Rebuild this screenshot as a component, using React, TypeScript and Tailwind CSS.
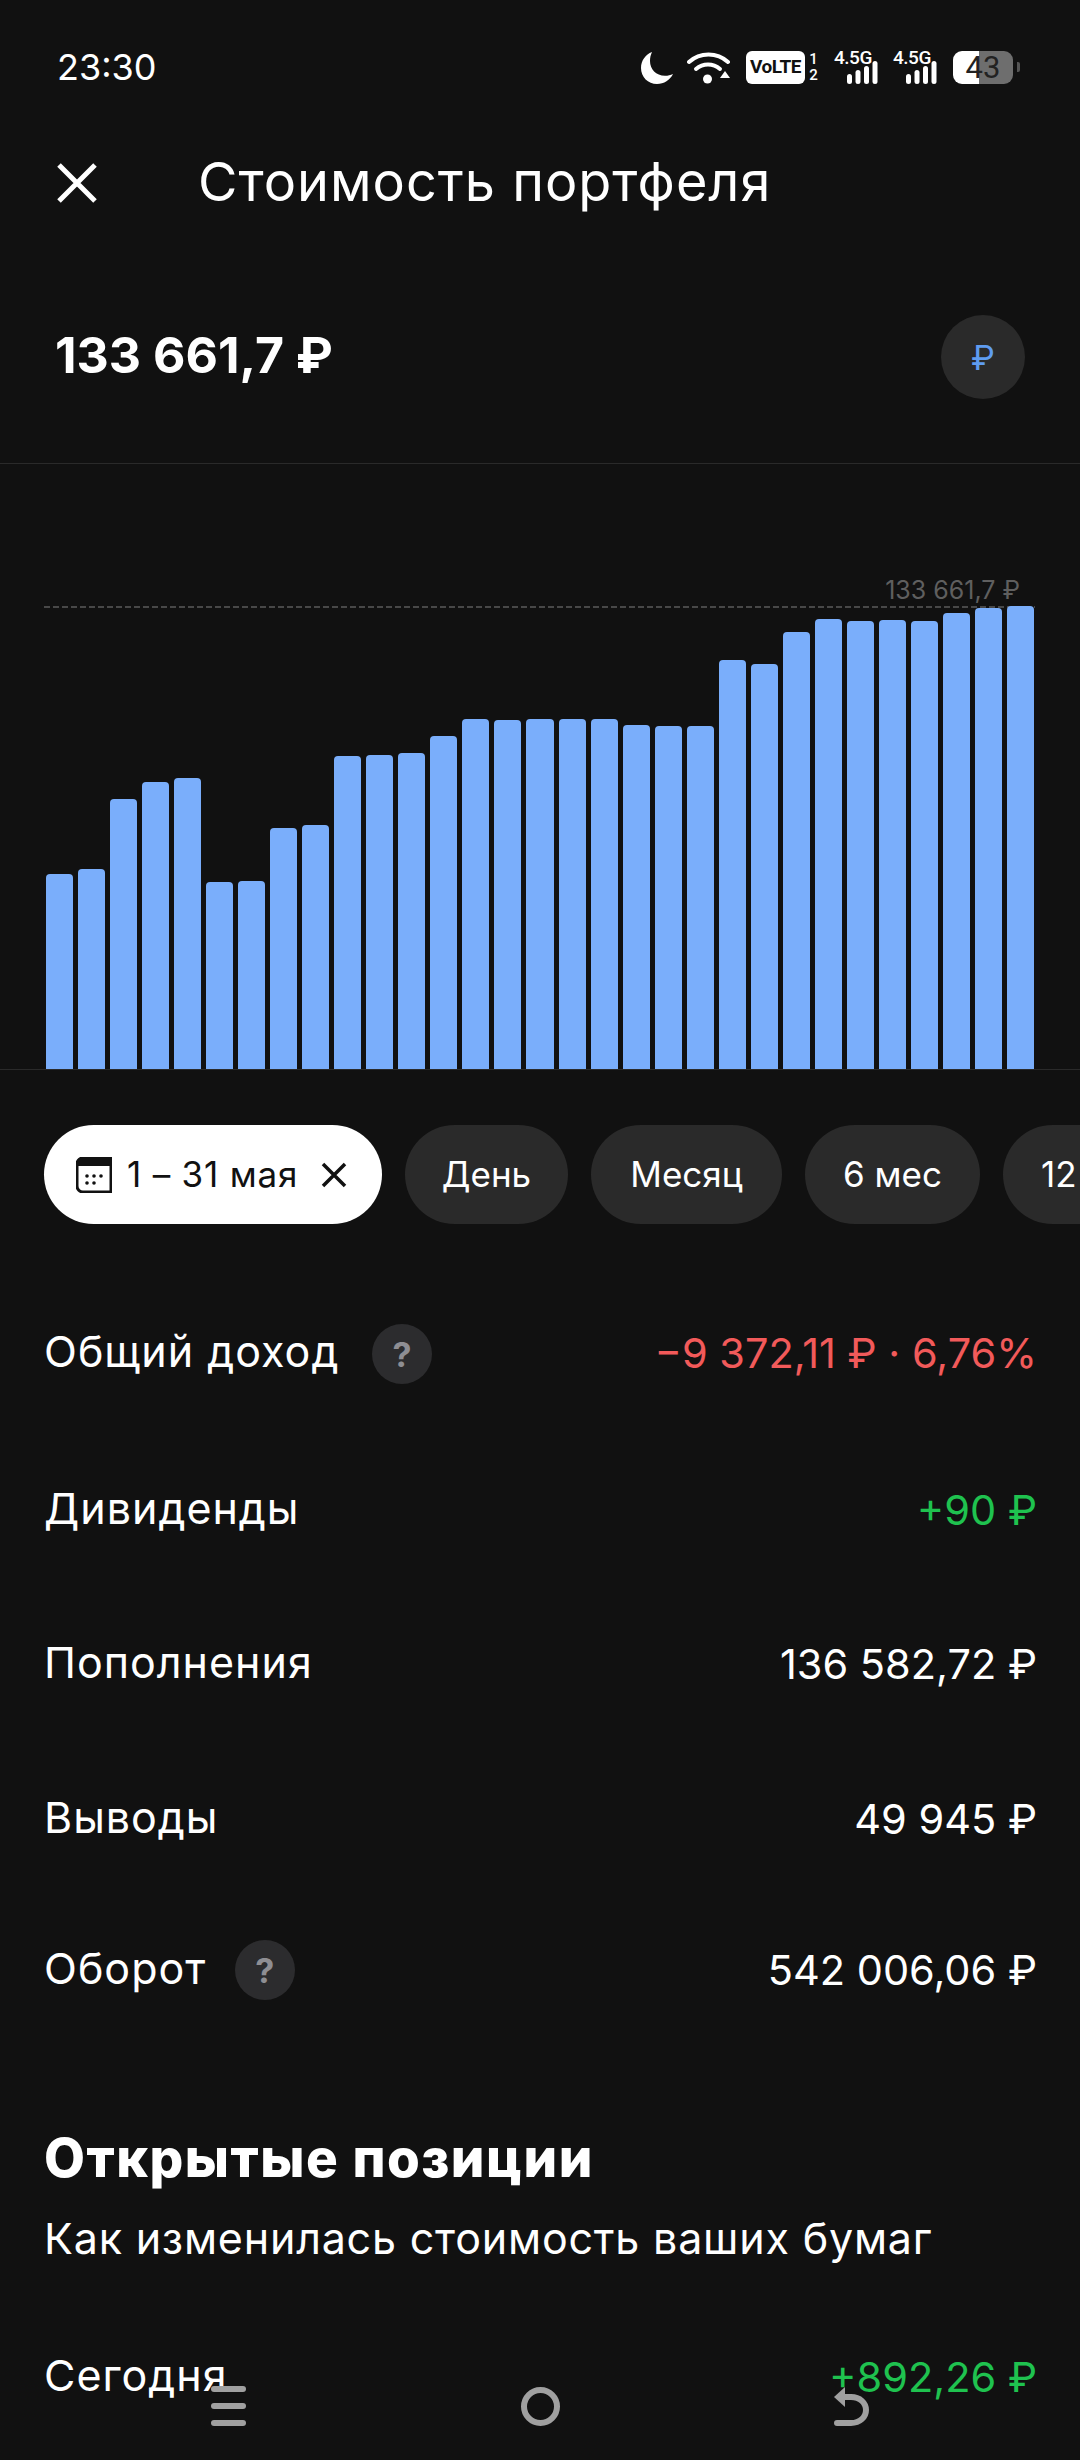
import { X } from "lucide-react";

const font = "font-['Inter',sans-serif]";

const barTops = [
  874, 869, 799, 782, 778, 882, 881, 828, 825, 756, 755, 753, 736, 719, 720, 719,
  719, 719, 725, 726, 726, 660, 664, 632, 619, 621, 620, 621, 613, 608, 606,
];
const chartBottom = 1069;

function Moon() {
  return (
    <svg width="32" height="33" viewBox="0 0 32 33" fill="white">
      <path d="M11 1C4.500 3.500 0 9.500 0 17c0 9 7 16 16 16 7 0 13-4 16-10-2.500 1.200-5 1.800-8 1.800C15 24.800 9 18 9 10c0-3.200.7-6.200 2-9z" />
    </svg>
  );
}

function Wifi() {
  return (
    <svg width="44" height="33" viewBox="0 0 44 33" fill="none" stroke="white" strokeWidth="4" strokeLinecap="round">
      <path d="M2 11C13 1 30 1 41 11" />
      <path d="M9 18c7-6 17-6 24 0" />
      <circle cx="20.500" cy="28" r="4.500" fill="white" stroke="none" />
      <path d="M38 20l5 7h-10z" fill="white" stroke="none" />
    </svg>
  );
}

function Signal() {
  return (
    <div className="relative w-[42px] h-[33px]">
      <span className="absolute left-[-1px] top-[-4px] text-[19px] leading-[22px] font-medium text-white tracking-[-0.5px] font-['Roboto',sans-serif]">4.5G</span>
      <svg className="absolute left-[12px] top-[10px]" width="31" height="23" viewBox="0 0 31 23" fill="white">
        <rect x="0" y="13" width="5" height="10" rx="2.500" />
        <rect x="8.500" y="9" width="5" height="14" rx="2.500" />
        <rect x="17" y="5" width="5" height="18" rx="2.500" />
        <rect x="25.500" y="0" width="5" height="23" rx="2.500" />
      </svg>
    </div>
  );
}

function StatusBar() {
  return (
    <div className="h-[134px] flex items-center pl-[57px] pr-[60px] justify-between">
      <span className="text-[36px] text-white">23:30</span>
      <div className="flex items-center">
        <Moon />
        <div className="w-[14px]" />
        <Wifi />
        <div className="w-[15px]" />
        <div className="w-[59px] h-[33px] bg-white rounded-[6px] flex items-center justify-center text-[19px] font-bold text-[#111] tracking-[-0.5px] font-['Roboto',sans-serif]">
          VoLTE
        </div>
        <div className="w-[9px] ml-[4px] flex flex-col items-center text-[15px] leading-[16px] font-medium text-white font-['Roboto',sans-serif]">
          <span>1</span>
          <span>2</span>
        </div>
        <div className="w-[17px]" />
        <Signal />
        <div className="w-[17px]" />
        <Signal />
        <div className="w-[17px]" />
        <div className="relative w-[60px] h-[33px]">
          <div className="flex h-full rounded-[9px] overflow-hidden">
            <div className="w-[26px] bg-white" />
            <div className="flex-1 bg-[#6e6e6e]" />
          </div>
          <span className="absolute inset-0 flex items-center justify-center text-[31px] leading-[33px] text-[#222] font-['Roboto',sans-serif]">43</span>
        </div>
        <div className="w-[3px] h-[10px] ml-[4px] bg-[#555] rounded-r-[2px]" />
      </div>
    </div>
  );
}

function Chart() {
  return (
    <div className="relative h-[606px] border-b border-[#2a2a2a] flex items-end pl-[46px] pr-[46px] gap-[5px]">
      <div className="absolute left-[44px] w-[991px] top-[142px] h-[2px] bg-[repeating-linear-gradient(90deg,#484848_0,#484848_6px,transparent_6px,transparent_9px)]" />
      <span className="absolute right-[60px] top-[110px] text-[25px] leading-[32px] text-[#5f5f5f]">133 661,7 ₽</span>
      {barTops.map((top, i) => (
        <div
          key={i}
          className="relative flex-1 bg-[#7aaefb] rounded-t-[4px]"
          style={{ height: chartBottom - top }}
        />
      ))}
    </div>
  );
}

function Chip({ label, className }: { label: string; className: string }) {
  return (
    <div className={`h-[99px] shrink-0 rounded-full bg-[#2a2a2a] flex items-center text-[35px] text-white ${className}`}>
      {label}
    </div>
  );
}

function Help({ className }: { className: string }) {
  return (
    <div className={`w-[60px] h-[60px] rounded-full bg-[#2c2c2e] flex items-center justify-center text-[34px] font-bold text-[#8e8e93] ${className}`}>
      ?
    </div>
  );
}

function Row(props: { label: string; value: string; valueClass?: string; height: string; help?: string }) {
  return (
    <div className={`flex items-center justify-between ${props.height}`}>
      <div className="flex items-center text-[43px] tracking-[1px] text-white">
        <span>{props.label}</span>
        {props.help && <Help className={props.help} />}
      </div>
      <span className={`mt-[5px] text-[41.5px] ${props.valueClass ?? "text-white"}`}>{props.value}</span>
    </div>
  );
}

export default function App() {
  return (
    <div className={`relative w-[1080px] h-[2460px] overflow-hidden bg-[#111111] ${font}`}>
      <StatusBar />
      <div className="h-[98px] flex items-center pl-[55px]">
        <svg width="44" height="44" viewBox="0 0 44 44" fill="none" stroke="white" strokeWidth="5">
          <path d="M4 4l36 36M40 4L4 40" />
        </svg>
        <span className="ml-[99px] mb-[3px] text-[54px] tracking-[1px] text-white">Стоимость портфеля</span>
      </div>
      <div className="mt-[83px] mb-[64px] pl-[55px] pr-[55px] flex items-center justify-between">
        <span className="mb-[3px] text-[50px] font-bold text-white">133 661,7 ₽</span>
        <div className="w-[84px] h-[84px] rounded-full bg-[#2a2a2a] flex items-center justify-center text-[34px] text-[#5f9cf0]">₽</div>
      </div>
      <div className="h-px bg-[#2a2a2a]" />
      <Chart />
      <div className="mt-[55px] pl-[44px] flex gap-[23px] overflow-hidden">
        <div className="h-[99px] w-[338px] shrink-0 rounded-full bg-white flex items-center pl-[32px] text-[35px] text-[#111]">
          <svg width="36" height="36" viewBox="0 0 36 36" fill="none">
            <path d="M7 1h28v34H7a6 6 0 0 1-6-6V7a6 6 0 0 1 6-6z" fill="none" stroke="#111" strokeWidth="3" />
            <path d="M7 0h29v9H0V7a7 7 0 0 1 7-7z" fill="#111" />
            <g fill="#111">
              <circle cx="11" cy="19" r="1.800" />
              <circle cx="18" cy="19" r="1.800" />
              <circle cx="25" cy="19" r="1.800" />
              <circle cx="11" cy="26" r="1.800" />
              <circle cx="18" cy="26" r="1.800" />
            </g>
          </svg>
          <span className="ml-[15px] tracking-[0.8px]">1 – 31 мая</span>
          <svg width="26" height="26" viewBox="0 0 26 26" fill="none" stroke="#111" strokeWidth="3.500" className="ml-[23px]">
            <path d="M2 2l22 22M24 2L2 24" />
          </svg>
        </div>
        <Chip label="День" className="w-[163px] justify-center" />
        <Chip label="Месяц" className="w-[191px] justify-center" />
        <Chip label="6 мес" className="w-[175px] justify-center" />
        <Chip label="12 мес" className="w-[175px] pl-[38px]" />
      </div>
      <div className="mt-[48px] pl-[44px] pr-[43px]">
        <Row label="Общий доход" value="−9 372,11 ₽ · 6,76%" valueClass="text-[#f25a5a]" height="h-[158px]" help="ml-[33px] mt-[6px]" />
        <Row label="Дивиденды" value="+90 ₽" valueClass="text-[#1fc24f]" height="h-[156px]" />
        <Row label="Пополнения" value="136 582,72 ₽" height="h-[152px]" />
        <Row label="Выводы" value="49 945 ₽" height="h-[158px]" />
        <Row label="Оборот" value="542 006,06 ₽" height="h-[144px]" help="ml-[29px] mt-[4px]" />
        <h2 className="mt-[86px] text-[53px] leading-[64px] tracking-[1.5px] font-extrabold text-white">Открытые позиции</h2>
        <p className="mt-[18px] text-[43px] leading-[60px] tracking-[0.8px] text-white">Как изменилась стоимость ваших бумаг</p>
        <Row label="Сегодня" value="+892,26 ₽" valueClass="text-[#1fc24f]" height="h-[214px]" />
      </div>
      <div className="absolute left-0 right-0 top-[2386px] flex justify-between pl-[211px] pr-[211px] items-center">
        <div className="flex flex-col gap-[11px]">
          <div className="w-[35px] h-[6px] rounded-full bg-[#a0a0a0]" />
          <div className="w-[35px] h-[6px] rounded-full bg-[#a0a0a0]" />
          <div className="w-[35px] h-[6px] rounded-full bg-[#a0a0a0]" />
        </div>
        <div className="w-[39px] h-[39px] rounded-full border-[6px] border-[#a0a0a0]" />
        <svg width="35" height="39" viewBox="0 0 35 39" fill="none" stroke="#a0a0a0" strokeWidth="6" strokeLinecap="round">
          <path d="M3 36h14c9 0 15-6 15-13s-6-13-15-13H6" />
          <path d="M0 10l11-10v20z" fill="#a0a0a0" stroke="none" />
        </svg>
      </div>
    </div>
  );
}
